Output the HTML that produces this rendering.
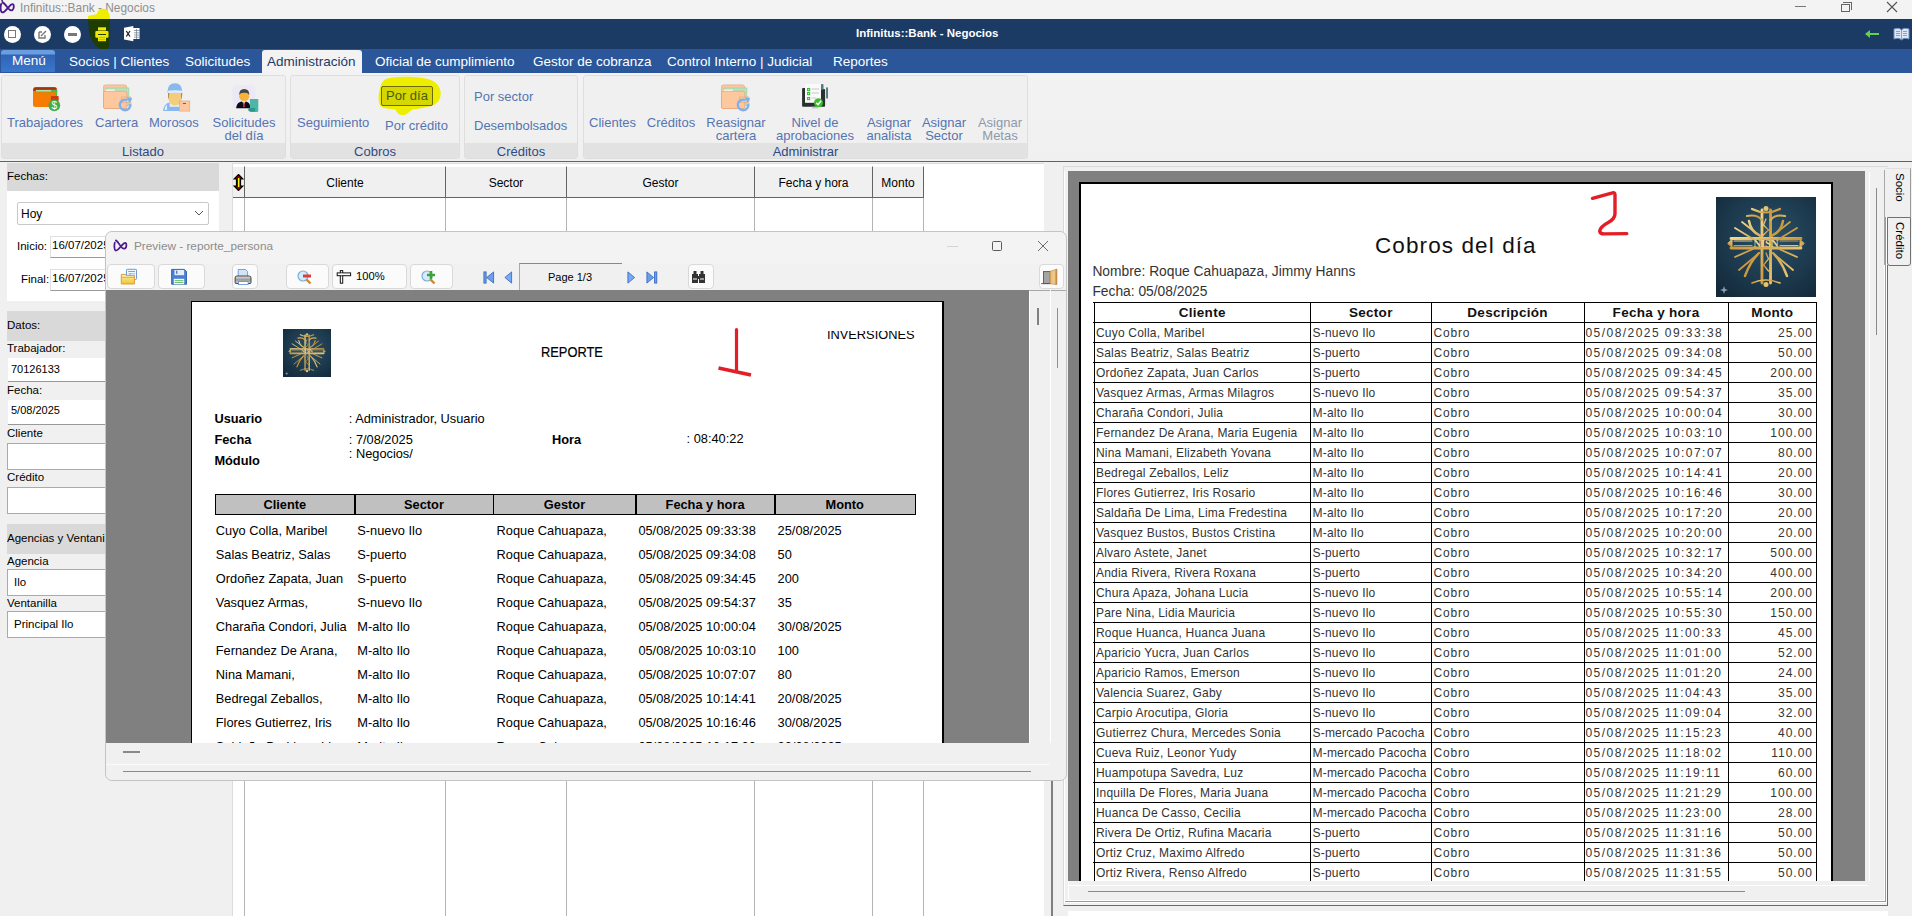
<!DOCTYPE html>
<html><head><meta charset="utf-8">
<style>
*{margin:0;padding:0;box-sizing:border-box}
html,body{width:1912px;height:916px;overflow:hidden;background:#f0f0f0;font-family:"Liberation Sans",sans-serif;position:relative}
.a{position:absolute}
.t{position:absolute;white-space:nowrap;line-height:1}
.r2{transform:scaleY(1.12);transform-origin:0 10.9px}
</style></head><body>

<!-- ===== TITLE BAR ===== -->
<div class="a" style="left:0;top:0;width:1912px;height:19px;background:#f3f3f3"></div>
<svg class="a" style="left:0;top:0" width="16" height="15" viewBox="0 0 16 15"><path d="M1.8 0 L2.6 1.8" stroke="#3a1470" stroke-width="1.5"/><path d="M2.5 2.5 C4.5 3 6 5.5 7.8 8 C9.5 10 11 11 12.5 10 C14 9 14.2 5 13 4.3 C11.5 3.5 10 5.5 7.8 8 C6 10 4 13 2 12.3 C0.2 11.6 0.3 6 1.2 4" fill="none" stroke="#4c1a8c" stroke-width="1.9" stroke-linecap="round"/></svg>
<div class="t" style="left:20px;top:3px;font-size:11.9px;color:#8f8f8f">Infinitus::Bank - Negocios</div>
<div class="a" style="left:1795px;top:6px;width:11px;height:1px;background:#777"></div>
<div class="a" style="left:1841px;top:4px;width:9px;height:8px;border:1px solid #666"></div>
<div class="a" style="left:1843px;top:2px;width:9px;height:8px;border-top:1px solid #666;border-right:1px solid #666"></div>
<svg class="a" style="left:1886px;top:1px" width="12" height="12" viewBox="0 0 12 12"><path d="M1 1 L11 11 M11 1 L1 11" stroke="#555" stroke-width="1.1"/></svg>

<!-- ===== DARK TOOLBAR ===== -->
<div class="a" style="left:0;top:19px;width:1912px;height:30px;background:#1b3a64"></div>
<div class="a" style="left:4px;top:26px;width:17px;height:17px;border-radius:50%;background:#fff"></div>
<div class="a" style="left:8px;top:30px;width:8px;height:8px;border:1.5px solid #777"></div>
<div class="a" style="left:34px;top:26px;width:17px;height:17px;border-radius:50%;background:#fff"></div>
<svg class="a" style="left:37px;top:29px" width="11" height="11" viewBox="0 0 11 11"><path d="M2 3 V9 H8 V6 M2 3 H5 M4 7 L9 2" fill="none" stroke="#777" stroke-width="1.4"/></svg>
<div class="a" style="left:64px;top:26px;width:17px;height:17px;border-radius:50%;background:#fff"></div>
<div class="a" style="left:68px;top:33px;width:9px;height:3px;background:#777"></div>
<svg class="a" style="left:86px;top:6px" width="28" height="46" viewBox="0 0 28 46"><defs><clipPath id="hlt"><rect x="0" y="0" width="28" height="13"/></clipPath><clipPath id="hlb"><rect x="0" y="13" width="28" height="33"/></clipPath></defs>
<g clip-path="url(#hlt)"><path d="M2 10 C4 9 9 9 11 8 C12 3 15 2 19 3 C23 5 24 9 24 13 L24 20 L2 20 Z" fill="#eeee00"/></g>
<g clip-path="url(#hlb)"><path d="M2 10 C4 9 9 9 11 8 C12 3 15 2 19 3 C23 5 24 9 24 13 L23 40 C22 45 18 45 15 44 C10 40 5 36 3 26 Z" fill="#203d00"/></g></svg>
<svg class="a" style="left:95px;top:27px" width="14" height="15" viewBox="0 0 14 15"><rect x="3" y="0.3" width="8" height="3.2" fill="#f0e800"/><rect x="0.3" y="4" width="13.2" height="6.8" rx="1" fill="#f0e800"/><rect x="3" y="7" width="8" height="1" fill="#203d00"/><rect x="3" y="8" width="8" height="6.2" fill="#f0e800"/><rect x="4" y="10" width="6" height="0.8" fill="#b8b000"/><rect x="4" y="12.3" width="6" height="0.8" fill="#b8b000"/></svg>
<svg class="a" style="left:124px;top:26px" width="16" height="16" viewBox="0 0 16 16"><path d="M0 1.8 L9.3 0 V15.2 L0 13.4Z" fill="#fff"/><rect x="9" y="2" width="6.5" height="11" fill="#fff"/><path d="M2.3 5 L6 10.5 M6 5 L2.3 10.5" stroke="#222" stroke-width="1.3"/><path d="M10 4.5 H15 M10 6.8 H15 M10 9 H15 M10 11.2 H15 M12.5 3 V13" stroke="#7a8796" stroke-width="0.8"/></svg>
<div class="t" style="left:856px;top:28px;font-size:11.5px;font-weight:bold;color:#fff">Infinitus::Bank - Negocios</div>
<svg class="a" style="left:1864px;top:29px" width="16" height="10" viewBox="0 0 16 10"><path d="M1 5 L6 1 V4 H15 V6 H6 V9 Z" fill="#5fd44a"/></svg>
<svg class="a" style="left:1893px;top:27px" width="17" height="14" viewBox="0 0 17 14"><path d="M1 2 C4 1 7 1 8.5 3 C10 1 13 1 16 2 V12 C13 11 10 11 8.5 13 C7 11 4 11 1 12Z" fill="#dfe8f5" stroke="#6d8fc4" stroke-width="1"/><path d="M8.5 3V13 M3 4.5H7 M3 6.5H7 M3 8.5H7 M10 4.5H14 M10 6.5H14 M10 8.5H14" stroke="#6d8fc4" stroke-width="0.8"/></svg>

<!-- ===== MENU BAR ===== -->
<div class="a" style="left:0;top:49px;width:1912px;height:24px;background:#2b579a"></div>
<div class="a" style="left:1px;top:50px;width:54px;height:22px;border-radius:3px 3px 0 0;background:linear-gradient(#6a9ee0 0,#6a9ee0 4px,#2f64b5 5px,#3a76cc 100%)"></div>
<div class="t" style="left:12px;top:54px;font-size:13.5px;color:#fff">Menú</div>
<div class="t" style="left:69px;top:55px;font-size:13.5px;color:#fff">Socios | Clientes</div>
<div class="t" style="left:185px;top:55px;font-size:13.5px;color:#fff">Solicitudes</div>
<div class="a" style="left:262px;top:50px;width:100px;height:24px;border-radius:3px 3px 0 0;background:#f3f3f3"></div>
<div class="t" style="left:267px;top:55px;font-size:13.5px;color:#1f3a66">Administración</div>
<div class="t" style="left:375px;top:55px;font-size:13.5px;color:#fff">Oficial de cumplimiento</div>
<div class="t" style="left:533px;top:55px;font-size:13.5px;color:#fff">Gestor de cobranza</div>
<div class="t" style="left:667px;top:55px;font-size:13.5px;color:#fff">Control Interno | Judicial</div>
<div class="t" style="left:833px;top:55px;font-size:13.5px;color:#fff">Reportes</div>

<!-- ===== RIBBON ===== -->
<div class="a" style="left:0;top:73px;width:1912px;height:88px;background:linear-gradient(#f3f3f3,#f0f0f0)"></div>
<div class="a" style="left:1px;top:75px;width:285px;height:84px;border:1px solid #dedede;border-radius:3px;background:#f0f0f0"></div>
<div class="a" style="left:2px;top:143px;width:283px;height:15px;background:#e2e2e2"></div>
<div class="a" style="left:290px;top:75px;width:170px;height:84px;border:1px solid #dedede;border-radius:3px;background:#f0f0f0"></div>
<div class="a" style="left:291px;top:143px;width:168px;height:15px;background:#e2e2e2"></div>
<div class="a" style="left:464px;top:75px;width:114px;height:84px;border:1px solid #dedede;border-radius:3px;background:#f0f0f0"></div>
<div class="a" style="left:465px;top:143px;width:112px;height:15px;background:#e2e2e2"></div>
<div class="a" style="left:583px;top:75px;width:445px;height:84px;border:1px solid #dedede;border-radius:3px;background:#f0f0f0"></div>
<div class="a" style="left:584px;top:143px;width:443px;height:15px;background:#e2e2e2"></div>
<div class="a" style="left:0;top:160.5px;width:1912px;height:1.6px;background:#3e67a6"></div>


<!-- ribbon icons -->
<svg class="a" style="left:33px;top:86px" width="28" height="26" viewBox="0 0 28 26"><rect x="0" y="0.9" width="24" height="20" rx="2.5" fill="#f57c00"/><path d="M0.3 4.5 Q0.3 1.2 3 1.2 H21 Q23.7 1.2 23.7 3.5 V5 H0.3Z" fill="#a8320a"/><rect x="2.6" y="3.8" width="21.6" height="2.4" fill="#4cbb4c"/><rect x="3" y="4.4" width="15" height="0.9" fill="#e8ffe8"/><rect x="23" y="3.8" width="1.2" height="7" fill="#4cbb4c"/><rect x="17.9" y="10" width="7.8" height="5" rx="0.8" fill="#d03c10"/><circle cx="21.3" cy="19.3" r="5.9" fill="#3fae4f"/><text x="21.3" y="23.2" font-family="Liberation Sans" font-size="10" fill="#fff" text-anchor="middle">$</text></svg>
<svg class="a" style="left:103px;top:84px" width="31" height="29" viewBox="0 0 31 29"><rect x="0.3" y="0.9" width="23.5" height="23.6" rx="2.5" fill="#fdc89e" stroke="#e49a70" stroke-width="0.6"/><rect x="2.3" y="4" width="23.6" height="17.6" fill="#b9e2bd" stroke="#8fcf99" stroke-width="0.6"/><rect x="2.5" y="5.6" width="9.3" height="1.4" fill="#fff"/><rect x="0.5" y="7.2" width="23.3" height="17.3" rx="1.5" fill="#fdc89e" stroke="#e49a70" stroke-width="0.6"/><rect x="18.7" y="13" width="9.2" height="5.2" fill="#fdc89e" stroke="#e49a70" stroke-width="0.5"/><path d="M27.2 19.5 A5.3 5.3 0 1 1 24.5 16.2" fill="none" stroke="#7fb0ee" stroke-width="2.4"/><path d="M23.5 13.2 L29.2 14.2 L26.8 19Z" fill="#7fb0ee"/></svg>
<svg class="a" style="left:162px;top:82px" width="29" height="30" viewBox="162 82 29 30"><path d="M163 111.1 Q163.5 103.5 170 102.2 H179.2 V111.1Z" fill="#8ab8ee"/><path d="M164.5 110 Q165 106 167 104.5 V110Z" fill="#dff0fb"/><rect x="169.7" y="102.2" width="9.5" height="4.6" fill="#dff0fb"/><path d="M168 93 Q168 105.5 175.1 105.5 Q182.2 105.5 182.2 93Z" fill="#f3cd7c"/><path d="M168 93 Q168 98 169 99.5 L169.2 93Z M182.2 93 Q182.2 98 181.2 99.5 L181 93Z" fill="#b8834a"/><path d="M167.4 92.4 Q167.4 83.2 174.9 83.2 Q182.3 83.2 182.3 92.4Z" fill="#8ab8ee"/><path d="M168 90.8 Q175 89.5 182 90.8 L181.8 93 Q175 92 168.2 93Z" fill="#e0f0ff"/><rect x="179.5" y="101" width="10.3" height="10.1" fill="#fdc89e" stroke="#e0a07a" stroke-width="0.6"/><rect x="182.9" y="103" width="3.1" height="0.9" fill="#8a4a20"/></svg>
<svg class="a" style="left:232px;top:85px" width="28" height="28" viewBox="232 85 28 28"><rect x="232.7" y="85.5" width="22.7" height="23" rx="2.5" fill="#ece8f6"/><path d="M236.1 108.2 Q236.5 101.5 243.9 101 Q250.5 101.5 250.5 108.2Z" fill="#0a0a1a"/><path d="M242 101 L243.9 105 L245.8 101Z" fill="#fff"/><path d="M243.4 101.8 H244.4 L244.8 106.5 L243.9 107.5 L243 106.5Z" fill="#d0303a"/><ellipse cx="244.2" cy="96.2" rx="5" ry="4.9" fill="#f5b23c"/><path d="M239.2 95 Q239 88.9 244.2 88.9 Q249.4 88.9 249.3 95 Q248 92.5 244.2 92.8 Q240.5 92.5 239.2 95Z" fill="#454545"/><path d="M249.9 99 H258.3 V110.5 Q258.3 112 256.8 112 H250 Z" fill="#4db6a8"/><path d="M248.2 109.5 Q248.2 107.9 250 107.9 H255.1 V111.4 H250 Q248.2 111.4 248.2 109.5Z" fill="#2a9985"/></svg>
<svg class="a" style="left:721px;top:84px" width="31" height="29" viewBox="0 0 31 29"><rect x="0.3" y="0.9" width="23.5" height="23.6" rx="2.5" fill="#fdc89e" stroke="#e49a70" stroke-width="0.6"/><rect x="2.3" y="4" width="23.6" height="17.6" fill="#b9e2bd" stroke="#8fcf99" stroke-width="0.6"/><rect x="2.5" y="5.6" width="9.3" height="1.4" fill="#fff"/><rect x="0.5" y="7.2" width="23.3" height="17.3" rx="1.5" fill="#fdc89e" stroke="#e49a70" stroke-width="0.6"/><rect x="18.7" y="13" width="9.2" height="5.2" fill="#fdc89e" stroke="#e49a70" stroke-width="0.5"/><path d="M27.2 19.5 A5.3 5.3 0 1 1 24.5 16.2" fill="none" stroke="#7fb0ee" stroke-width="2.4"/><path d="M23.5 13.2 L29.2 14.2 L26.8 19Z" fill="#7fb0ee"/></svg>
<svg class="a" style="left:800px;top:82px" width="32" height="28" viewBox="800 82 32 28"><path d="M802.1 89 Q802.1 88.1 803 88.1 H805 V102.6 H821 V89 H824.2 Q825.1 89 825.1 90 V105.8 Q825.1 106.7 824.2 106.7 H803 Q802.1 106.7 802.1 105.8Z" fill="#2a2f30"/><rect x="805.1" y="84" width="15.6" height="18.6" fill="#fafafa"/><rect x="821" y="84" width="2.5" height="6" rx="1" fill="#4f7a80"/><rect x="826.1" y="87.3" width="1.9" height="11.3" rx="0.9" fill="#4f7a80"/><rect x="807" y="88" width="3.2" height="3.2" fill="#3cc03c"/><rect x="808.2" y="89.2" width="0.9" height="0.9" fill="#fff"/><rect x="807" y="92" width="3.2" height="3.2" fill="#3cc03c"/><rect x="808.2" y="93.2" width="0.9" height="0.9" fill="#fff"/><rect x="807" y="97" width="3.2" height="3.2" fill="#3cc03c"/><rect x="808.2" y="98.2" width="0.9" height="0.9" fill="#fff"/><path d="M811.5 89 H819 M811.5 93 H819 M811.5 98 H816" stroke="#c8c8c8" stroke-width="1.2"/><rect x="812" y="106.7" width="6" height="1.8" fill="#c8c8c8"/><circle cx="818.5" cy="102.8" r="4.5" fill="#3cbf2c"/><path d="M816.2 102.8 L818 104.6 L821 100.8" fill="none" stroke="#fff" stroke-width="1.5"/></svg>

<!-- ribbon labels -->
<div class="t" style="left:7px;top:116px;font-size:13px;color:#5574b0">Trabajadores</div>
<div class="t" style="left:95px;top:116px;font-size:13px;color:#5574b0">Cartera</div>
<div class="t" style="left:149px;top:116px;font-size:13px;color:#5574b0">Morosos</div>
<div class="t" style="left:212px;top:116px;font-size:13px;color:#5574b0;text-align:center;width:64px;line-height:13px">Solicitudes<br>del día</div>
<div class="t" style="left:0;top:145px;width:286px;text-align:center;font-size:13px;color:#2c4a85">Listado</div>

<div class="t" style="left:297px;top:116px;font-size:13px;color:#5574b0">Seguimiento</div>
<svg class="a" style="left:376px;top:74px" width="68" height="44" viewBox="376 74 68 44"><path d="M380.4 86.7 C382 81 385 78.4 392 77.5 C400 76.5 407 76.5 414 77 C422 77.5 428 78.5 432 80.5 C437 83 440.7 88 440.7 93 C440.7 98 439 102 434 105 C428 107.5 420 108.5 412.2 109.5 C410 111 407 115 403 115.2 C399 115.4 397 113 395.5 109.5 C390 109 383 108.5 380.5 106 C378.5 103 378.5 97 378.7 94 Z" fill="#eeee00"/></svg>
<div class="a" style="left:381px;top:86px;width:52px;height:20px;border:1px solid #6b6b00;border-radius:2px;background:#d6d600"></div>
<div class="t" style="left:386px;top:89px;font-size:13px;color:#4a5a10">Por día</div>
<div class="t" style="left:385px;top:119px;font-size:13px;color:#5574b0">Por crédito</div>
<div class="t" style="left:290px;top:145px;width:170px;text-align:center;font-size:13px;color:#2c4a85">Cobros</div>

<div class="t" style="left:474px;top:90px;font-size:13px;color:#5574b0">Por sector</div>
<div class="t" style="left:474px;top:119px;font-size:13px;color:#5574b0">Desembolsados</div>
<div class="t" style="left:464px;top:145px;width:114px;text-align:center;font-size:13px;color:#2c4a85">Créditos</div>

<div class="t" style="left:582px;top:116px;width:61px;text-align:center;font-size:13px;color:#5574b0">Clientes</div>
<div class="t" style="left:641px;top:116px;width:60px;text-align:center;font-size:13px;color:#5574b0">Créditos</div>
<div class="t" style="left:700px;top:116px;width:72px;text-align:center;font-size:13px;line-height:13px;color:#5574b0">Reasignar<br>cartera</div>
<div class="t" style="left:770px;top:116px;width:90px;text-align:center;font-size:13px;line-height:13px;color:#5574b0">Nivel de<br>aprobaciones</div>
<div class="t" style="left:859px;top:116px;width:60px;text-align:center;font-size:13px;line-height:13px;color:#5574b0">Asignar<br>analista</div>
<div class="t" style="left:914px;top:116px;width:60px;text-align:center;font-size:13px;line-height:13px;color:#5574b0">Asignar<br>Sector</div>
<div class="t" style="left:970px;top:116px;width:60px;text-align:center;font-size:13px;line-height:13px;color:#8d99ab">Asignar<br>Metas</div>
<div class="t" style="left:583px;top:145px;width:445px;text-align:center;font-size:13px;color:#2c4a85">Administrar</div>

<!-- ===== LEFT PANEL ===== -->
<div class="a" style="left:7px;top:163px;width:212px;height:28px;background:#d9d9d9"></div>
<div class="t" style="left:7px;top:171px;font-size:11.5px;color:#000">Fechas:</div>
<div class="a" style="left:7px;top:191px;width:212px;height:110px;background:#fff"></div>
<div class="a" style="left:17px;top:202px;width:192px;height:23px;border:1px solid #c9c9c9;border-radius:2px;background:#fff"></div>
<div class="t" style="left:21px;top:208px;font-size:12px;color:#000">Hoy</div>
<svg class="a" style="left:194px;top:210px" width="10" height="6" viewBox="0 0 10 6"><path d="M1 1 L5 5 L9 1" fill="none" stroke="#555" stroke-width="1"/></svg>
<div class="t" style="left:17px;top:241px;font-size:11.5px;color:#000">Inicio:</div>
<div class="a" style="left:50px;top:236px;width:80px;height:22px;border-bottom:1px solid #999;border-left:1px solid #e0e0e0;border-top:1px solid #e0e0e0;background:#fff"></div>
<div class="t" style="left:52px;top:240px;font-size:11.5px;color:#000">16/07/2025</div>
<div class="t" style="left:21px;top:274px;font-size:11.5px;color:#000">Final:</div>
<div class="a" style="left:50px;top:269px;width:80px;height:22px;border-bottom:1px solid #999;border-left:1px solid #e0e0e0;border-top:1px solid #e0e0e0;background:#fff"></div>
<div class="t" style="left:52px;top:273px;font-size:11.5px;color:#000">16/07/2025</div>

<div class="a" style="left:7px;top:311px;width:212px;height:30px;background:#d9d9d9"></div>
<div class="t" style="left:7px;top:320px;font-size:11.5px;color:#000">Datos:</div>
<div class="t" style="left:7px;top:343px;font-size:11.5px;color:#000">Trabajador:</div>
<div class="a" style="left:8px;top:358px;width:210px;height:24px;border-bottom:1px solid #999;background:#fff"></div>
<div class="t" style="left:11px;top:364px;font-size:11px;color:#000">70126133</div>
<div class="t" style="left:7px;top:385px;font-size:11.5px;color:#000">Fecha:</div>
<div class="a" style="left:8px;top:400px;width:210px;height:25px;border-bottom:1px solid #999;background:#fff"></div>
<div class="t" style="left:11px;top:405px;font-size:11px;color:#000">5/08/2025</div>
<div class="t" style="left:7px;top:428px;font-size:11.5px;color:#000">Cliente</div>
<div class="a" style="left:7px;top:443px;width:212px;height:27px;border:1px solid #aaa;background:#fff"></div>
<div class="t" style="left:7px;top:472px;font-size:11.5px;color:#000">Crédito</div>
<div class="a" style="left:7px;top:487px;width:212px;height:27px;border:1px solid #aaa;background:#fff"></div>
<div class="a" style="left:7px;top:524px;width:212px;height:30px;background:#d9d9d9"></div>
<div class="t" style="left:7px;top:533px;font-size:11.5px;color:#000">Agencias y Ventanillas</div>
<div class="t" style="left:7px;top:556px;font-size:11.5px;color:#000">Agencia</div>
<div class="a" style="left:7px;top:569px;width:212px;height:27px;border:1px solid #aaa;background:#fff"></div>
<div class="t" style="left:14px;top:577px;font-size:11.5px;color:#000">Ilo</div>
<div class="t" style="left:7px;top:598px;font-size:11.5px;color:#000">Ventanilla</div>
<div class="a" style="left:7px;top:611px;width:212px;height:27px;border:1px solid #aaa;background:#fff"></div>
<div class="t" style="left:14px;top:619px;font-size:11.5px;color:#000">Principal Ilo</div>

<!-- ===== GRID ===== -->
<div class="a" style="left:232px;top:163px;width:814px;height:753px;background:#fff;border-left:1px solid #dcdcdc;border-top:1px solid #dcdcdc"></div>
<div class="a" style="left:233px;top:166px;width:690px;height:32px;background:#f0f0f0;border-top:1px solid #fff;border-bottom:1px solid #646464"></div>
<div class="a" style="left:1044px;top:163px;width:20px;height:753px;background:#f0f0f0"></div>
<div class="a" style="left:1051px;top:780px;width:2px;height:136px;background:#808080"></div>
<div class="a" style="left:244px;top:166px;width:1px;height:750px;background:#b4b4b4"></div>
<div class="a" style="left:244px;top:167px;width:1px;height:31px;background:#646464"></div>
<div class="a" style="left:445px;top:166px;width:1px;height:750px;background:#b4b4b4"></div>
<div class="a" style="left:445px;top:167px;width:1px;height:31px;background:#646464"></div>
<div class="a" style="left:566px;top:166px;width:1px;height:750px;background:#b4b4b4"></div>
<div class="a" style="left:566px;top:167px;width:1px;height:31px;background:#646464"></div>
<div class="a" style="left:754px;top:166px;width:1px;height:750px;background:#b4b4b4"></div>
<div class="a" style="left:754px;top:167px;width:1px;height:31px;background:#646464"></div>
<div class="a" style="left:872px;top:166px;width:1px;height:750px;background:#b4b4b4"></div>
<div class="a" style="left:872px;top:167px;width:1px;height:31px;background:#646464"></div>
<div class="a" style="left:923px;top:166px;width:1px;height:750px;background:#b4b4b4"></div>
<div class="a" style="left:923px;top:167px;width:1px;height:31px;background:#646464"></div>
<svg class="a" style="left:233px;top:174px" width="11" height="17" viewBox="0 0 11 17"><path d="M5.5 0.5 L10 5 H7.5 V12 H10 L5.5 16.5 L1 12 H3.5 V5 H1 Z" fill="#8b0000" stroke="#000" stroke-width="1.2"/><rect x="5" y="4" width="1.4" height="9" fill="#ffff00"/></svg>
<div class="t" style="left:245px;top:177px;width:200px;text-align:center;font-size:12px;color:#000">Cliente</div>
<div class="t" style="left:446px;top:177px;width:120px;text-align:center;font-size:12px;color:#000">Sector</div>
<div class="t" style="left:567px;top:177px;width:187px;text-align:center;font-size:12px;color:#000">Gestor</div>
<div class="t" style="left:755px;top:177px;width:117px;text-align:center;font-size:12px;color:#000">Fecha y hora</div>
<div class="t" style="left:873px;top:177px;width:50px;text-align:center;font-size:12px;color:#000">Monto</div>

<!-- ===== RIGHT PANEL ===== -->
<div class="a" style="left:1063px;top:166px;width:825px;height:740px;background:#f0f0f0;border-left:1px solid #dadada;border-top:1px solid #dadada;border-bottom:1.5px solid #6b6b6b"></div>
<div class="a" style="left:1064px;top:171px;width:823px;height:732px;border-right:1px solid #fff;border-bottom:1px solid #fff"></div>
<div class="a" style="left:1064px;top:171px;width:822px;height:731px;border-right:1px solid #9a9a9a;border-bottom:1px solid #9a9a9a"></div>
<div class="a" style="left:1064px;top:171px;width:821px;height:730px;border-right:1px solid #fff;border-bottom:1px solid #fff"></div>
<div class="a" style="left:1064px;top:171px;width:1px;height:731px;background:#fff"></div>
<div class="a" style="left:1068px;top:171px;width:797px;height:710px;background:#808080;overflow:hidden">
<div class="a" style="left:11px;top:11px;width:754px;height:800px;background:#fff;border-left:2px solid #000;border-top:2px solid #000;border-right:2px solid #000"></div>
<div class="t" style="left:307.0px;top:63.7px;font-size:22.5px;letter-spacing:1.1px;color:#111;">Cobros del día</div>
<svg class="a" style="left:518px;top:17px" width="48" height="52" viewBox="0 0 48 52"><path d="M6.5 10.3 L26.5 4.8 Q29 4 29 7 L29 26 Q28.5 31 23 34 Q14 39 13.7 43 Q14 45.9 18 45.9 L40.8 45.6" fill="none" stroke="#e41e26" stroke-width="3.4" stroke-linecap="round" stroke-linejoin="round"/></svg>
<svg class="a" style="left:648px;top:26px" width="100" height="100" viewBox="0 0 100 100"><defs><radialGradient id="bg2" cx="55%" cy="40%" r="75%"><stop offset="0" stop-color="#2b5169"/><stop offset="1" stop-color="#13293a"/></radialGradient><linearGradient id="gd2" x1="0" y1="0" x2="1" y2="1"><stop offset="0" stop-color="#f2d88c"/><stop offset="0.5" stop-color="#c9963c"/><stop offset="1" stop-color="#e8c470"/></linearGradient></defs>
<rect width="100" height="100" fill="url(#bg2)"/>
<g fill="none" stroke="url(#gd2)" stroke-linecap="round">
<path d="M46 13 V86 M54.5 13 V86" stroke-width="2.8"/>
<path d="M50 22 L47.5 28 L52.5 33 L47.5 38 M50 56 L52.5 62 L47.5 68 L52.5 74" stroke-width="1.3"/>
<path d="M15 41.5 H85 M15 51 H85" stroke-width="2.8"/>
<path d="M18 44 H36 M18 48.5 H36 M64 44 H82 M64 48.5 H82" stroke-width="1.1"/>
<path d="M12 46.2 L16 42.5 L16 50 Z M88 46.2 L84 42.5 L84 50 Z" fill="#d8ae55" stroke-width="1"/>
<path d="M36 12 Q50 19 64 12 M31 19 Q41 17 46 23 M69 19 Q59 17 54.5 23" stroke-width="2.2"/>
<path d="M26 25 L44 39 M74 25 L56 39 M19 31 L37 42 M81 31 L63 42 M19 60 L37 52 M81 60 L63 52 M23 73 L42 57 M77 73 L58 57" stroke-width="1.8"/>
<path d="M33 24 Q35 35 44 38.5 M67 24 Q65 35 56 38.5 M43 56 Q34 65 29 79 M57 56 Q66 65 71 79" stroke-width="2.4"/>
<path d="M36 86 Q50 80 64 86" stroke-width="1.6"/>
</g>
<circle cx="50" cy="11.5" r="2.5" fill="#e6c46e"/><circle cx="50" cy="87.5" r="2.5" fill="#e6c46e"/>
<text x="50" y="50" font-family="Liberation Serif" font-size="10.5" font-weight="bold" fill="#f0d48a" text-anchor="middle">NISN</text>
<path d="M8 89 L9 92 L12 93 L9 94 L8 97 L7 94 L4 93 L7 92Z" fill="#8aa0b4"/></svg>
<div class="t" style="left:24.4px;top:93.9px;font-size:13.8px;color:#333;">Nombre: Roque Cahuapaza, Jimmy Hanns</div>
<div class="t" style="left:24.4px;top:114.0px;font-size:13.8px;color:#333;">Fecha: 05/08/2025</div>
<div class="a" style="left:25.9px;top:131.3px;width:1.5px;height:600.0px;background:#000"></div>
<div class="a" style="left:241.9px;top:131.3px;width:1.5px;height:600.0px;background:#000"></div>
<div class="a" style="left:362.9px;top:131.3px;width:1.5px;height:600.0px;background:#000"></div>
<div class="a" style="left:515.9px;top:131.3px;width:1.5px;height:600.0px;background:#000"></div>
<div class="a" style="left:659.9px;top:131.3px;width:1.5px;height:600.0px;background:#000"></div>
<div class="a" style="left:747.9px;top:131.3px;width:1.5px;height:600.0px;background:#000"></div>
<div class="a" style="left:25.4px;top:130.9px;width:723.9px;height:1.5px;background:#000"></div>
<div class="a" style="left:25.4px;top:150.9px;width:723.9px;height:1.5px;background:#000"></div>
<div class="a" style="left:25.4px;top:170.9px;width:723.9px;height:1.5px;background:#000"></div>
<div class="a" style="left:25.4px;top:190.9px;width:723.9px;height:1.5px;background:#000"></div>
<div class="a" style="left:25.4px;top:210.9px;width:723.9px;height:1.5px;background:#000"></div>
<div class="a" style="left:25.4px;top:230.9px;width:723.9px;height:1.5px;background:#000"></div>
<div class="a" style="left:25.4px;top:250.9px;width:723.9px;height:1.5px;background:#000"></div>
<div class="a" style="left:25.4px;top:270.9px;width:723.9px;height:1.5px;background:#000"></div>
<div class="a" style="left:25.4px;top:290.9px;width:723.9px;height:1.5px;background:#000"></div>
<div class="a" style="left:25.4px;top:310.9px;width:723.9px;height:1.5px;background:#000"></div>
<div class="a" style="left:25.4px;top:330.9px;width:723.9px;height:1.5px;background:#000"></div>
<div class="a" style="left:25.4px;top:350.9px;width:723.9px;height:1.5px;background:#000"></div>
<div class="a" style="left:25.4px;top:370.9px;width:723.9px;height:1.5px;background:#000"></div>
<div class="a" style="left:25.4px;top:390.9px;width:723.9px;height:1.5px;background:#000"></div>
<div class="a" style="left:25.4px;top:410.9px;width:723.9px;height:1.5px;background:#000"></div>
<div class="a" style="left:25.4px;top:430.9px;width:723.9px;height:1.5px;background:#000"></div>
<div class="a" style="left:25.4px;top:450.9px;width:723.9px;height:1.5px;background:#000"></div>
<div class="a" style="left:25.4px;top:470.9px;width:723.9px;height:1.5px;background:#000"></div>
<div class="a" style="left:25.4px;top:490.9px;width:723.9px;height:1.5px;background:#000"></div>
<div class="a" style="left:25.4px;top:510.9px;width:723.9px;height:1.5px;background:#000"></div>
<div class="a" style="left:25.4px;top:530.9px;width:723.9px;height:1.5px;background:#000"></div>
<div class="a" style="left:25.4px;top:550.9px;width:723.9px;height:1.5px;background:#000"></div>
<div class="a" style="left:25.4px;top:570.9px;width:723.9px;height:1.5px;background:#000"></div>
<div class="a" style="left:25.4px;top:590.9px;width:723.9px;height:1.5px;background:#000"></div>
<div class="a" style="left:25.4px;top:610.9px;width:723.9px;height:1.5px;background:#000"></div>
<div class="a" style="left:25.4px;top:630.9px;width:723.9px;height:1.5px;background:#000"></div>
<div class="a" style="left:25.4px;top:650.9px;width:723.9px;height:1.5px;background:#000"></div>
<div class="a" style="left:25.4px;top:670.9px;width:723.9px;height:1.5px;background:#000"></div>
<div class="a" style="left:25.4px;top:690.9px;width:723.9px;height:1.5px;background:#000"></div>
<div class="a" style="left:25.4px;top:710.9px;width:723.9px;height:1.5px;background:#000"></div>
<div class="a" style="left:25.4px;top:730.9px;width:723.9px;height:1.5px;background:#000"></div>
<div class="t" style="left:26.0px;top:134.5px;width:216.4px;text-align:center;font-size:13.5px;font-weight:bold;color:#111;letter-spacing:0.3px">Cliente</div>
<div class="t" style="left:242.4px;top:134.5px;width:120.8px;text-align:center;font-size:13.5px;font-weight:bold;color:#111;letter-spacing:0.3px">Sector</div>
<div class="t" style="left:363.2px;top:134.5px;width:152.8px;text-align:center;font-size:13.5px;font-weight:bold;color:#111;letter-spacing:0.3px">Descripción</div>
<div class="t" style="left:516.0px;top:134.5px;width:144.1px;text-align:center;font-size:13.5px;font-weight:bold;color:#111;letter-spacing:0.3px">Fecha y hora</div>
<div class="t" style="left:660.1px;top:134.5px;width:88.5px;text-align:center;font-size:13.5px;font-weight:bold;color:#111;letter-spacing:0.3px">Monto</div>
<div class="t r2" style="left:28.0px;top:155.9px;font-size:12px;color:#333;letter-spacing:0.2px">Cuyo Colla, Maribel</div>
<div class="t r2" style="left:244.5px;top:155.9px;font-size:12px;color:#333;letter-spacing:0.2px">S-nuevo Ilo</div>
<div class="t r2" style="left:365.5px;top:155.9px;font-size:12px;color:#333;letter-spacing:0.8px">Cobro</div>
<div class="t r2" style="left:517.5px;top:155.9px;font-size:12px;color:#333;letter-spacing:1.45px">05/08/2025 09:33:38</div>
<div class="t r2" style="left:660px;top:155.9px;width:85px;text-align:right;font-size:12px;color:#333;letter-spacing:1px">25.00</div>
<div class="t r2" style="left:28.0px;top:175.9px;font-size:12px;color:#333;letter-spacing:0.2px">Salas Beatriz, Salas Beatriz</div>
<div class="t r2" style="left:244.5px;top:175.9px;font-size:12px;color:#333;letter-spacing:0.2px">S-puerto</div>
<div class="t r2" style="left:365.5px;top:175.9px;font-size:12px;color:#333;letter-spacing:0.8px">Cobro</div>
<div class="t r2" style="left:517.5px;top:175.9px;font-size:12px;color:#333;letter-spacing:1.45px">05/08/2025 09:34:08</div>
<div class="t r2" style="left:660px;top:175.9px;width:85px;text-align:right;font-size:12px;color:#333;letter-spacing:1px">50.00</div>
<div class="t r2" style="left:28.0px;top:195.9px;font-size:12px;color:#333;letter-spacing:0.2px">Ordoñez Zapata, Juan Carlos</div>
<div class="t r2" style="left:244.5px;top:195.9px;font-size:12px;color:#333;letter-spacing:0.2px">S-puerto</div>
<div class="t r2" style="left:365.5px;top:195.9px;font-size:12px;color:#333;letter-spacing:0.8px">Cobro</div>
<div class="t r2" style="left:517.5px;top:195.9px;font-size:12px;color:#333;letter-spacing:1.45px">05/08/2025 09:34:45</div>
<div class="t r2" style="left:660px;top:195.9px;width:85px;text-align:right;font-size:12px;color:#333;letter-spacing:1px">200.00</div>
<div class="t r2" style="left:28.0px;top:215.9px;font-size:12px;color:#333;letter-spacing:0.2px">Vasquez Armas, Armas Milagros</div>
<div class="t r2" style="left:244.5px;top:215.9px;font-size:12px;color:#333;letter-spacing:0.2px">S-nuevo Ilo</div>
<div class="t r2" style="left:365.5px;top:215.9px;font-size:12px;color:#333;letter-spacing:0.8px">Cobro</div>
<div class="t r2" style="left:517.5px;top:215.9px;font-size:12px;color:#333;letter-spacing:1.45px">05/08/2025 09:54:37</div>
<div class="t r2" style="left:660px;top:215.9px;width:85px;text-align:right;font-size:12px;color:#333;letter-spacing:1px">35.00</div>
<div class="t r2" style="left:28.0px;top:235.9px;font-size:12px;color:#333;letter-spacing:0.2px">Charaña Condori, Julia</div>
<div class="t r2" style="left:244.5px;top:235.9px;font-size:12px;color:#333;letter-spacing:0.2px">M-alto Ilo</div>
<div class="t r2" style="left:365.5px;top:235.9px;font-size:12px;color:#333;letter-spacing:0.8px">Cobro</div>
<div class="t r2" style="left:517.5px;top:235.9px;font-size:12px;color:#333;letter-spacing:1.45px">05/08/2025 10:00:04</div>
<div class="t r2" style="left:660px;top:235.9px;width:85px;text-align:right;font-size:12px;color:#333;letter-spacing:1px">30.00</div>
<div class="t r2" style="left:28.0px;top:255.9px;font-size:12px;color:#333;letter-spacing:0.2px">Fernandez De Arana, Maria Eugenia</div>
<div class="t r2" style="left:244.5px;top:255.9px;font-size:12px;color:#333;letter-spacing:0.2px">M-alto Ilo</div>
<div class="t r2" style="left:365.5px;top:255.9px;font-size:12px;color:#333;letter-spacing:0.8px">Cobro</div>
<div class="t r2" style="left:517.5px;top:255.9px;font-size:12px;color:#333;letter-spacing:1.45px">05/08/2025 10:03:10</div>
<div class="t r2" style="left:660px;top:255.9px;width:85px;text-align:right;font-size:12px;color:#333;letter-spacing:1px">100.00</div>
<div class="t r2" style="left:28.0px;top:275.9px;font-size:12px;color:#333;letter-spacing:0.2px">Nina Mamani, Elizabeth Yovana</div>
<div class="t r2" style="left:244.5px;top:275.9px;font-size:12px;color:#333;letter-spacing:0.2px">M-alto Ilo</div>
<div class="t r2" style="left:365.5px;top:275.9px;font-size:12px;color:#333;letter-spacing:0.8px">Cobro</div>
<div class="t r2" style="left:517.5px;top:275.9px;font-size:12px;color:#333;letter-spacing:1.45px">05/08/2025 10:07:07</div>
<div class="t r2" style="left:660px;top:275.9px;width:85px;text-align:right;font-size:12px;color:#333;letter-spacing:1px">80.00</div>
<div class="t r2" style="left:28.0px;top:295.9px;font-size:12px;color:#333;letter-spacing:0.2px">Bedregal Zeballos, Leliz</div>
<div class="t r2" style="left:244.5px;top:295.9px;font-size:12px;color:#333;letter-spacing:0.2px">M-alto Ilo</div>
<div class="t r2" style="left:365.5px;top:295.9px;font-size:12px;color:#333;letter-spacing:0.8px">Cobro</div>
<div class="t r2" style="left:517.5px;top:295.9px;font-size:12px;color:#333;letter-spacing:1.45px">05/08/2025 10:14:41</div>
<div class="t r2" style="left:660px;top:295.9px;width:85px;text-align:right;font-size:12px;color:#333;letter-spacing:1px">20.00</div>
<div class="t r2" style="left:28.0px;top:315.9px;font-size:12px;color:#333;letter-spacing:0.2px">Flores Gutierrez, Iris Rosario</div>
<div class="t r2" style="left:244.5px;top:315.9px;font-size:12px;color:#333;letter-spacing:0.2px">M-alto Ilo</div>
<div class="t r2" style="left:365.5px;top:315.9px;font-size:12px;color:#333;letter-spacing:0.8px">Cobro</div>
<div class="t r2" style="left:517.5px;top:315.9px;font-size:12px;color:#333;letter-spacing:1.45px">05/08/2025 10:16:46</div>
<div class="t r2" style="left:660px;top:315.9px;width:85px;text-align:right;font-size:12px;color:#333;letter-spacing:1px">30.00</div>
<div class="t r2" style="left:28.0px;top:335.9px;font-size:12px;color:#333;letter-spacing:0.2px">Saldaña De Lima, Lima Fredestina</div>
<div class="t r2" style="left:244.5px;top:335.9px;font-size:12px;color:#333;letter-spacing:0.2px">M-alto Ilo</div>
<div class="t r2" style="left:365.5px;top:335.9px;font-size:12px;color:#333;letter-spacing:0.8px">Cobro</div>
<div class="t r2" style="left:517.5px;top:335.9px;font-size:12px;color:#333;letter-spacing:1.45px">05/08/2025 10:17:20</div>
<div class="t r2" style="left:660px;top:335.9px;width:85px;text-align:right;font-size:12px;color:#333;letter-spacing:1px">20.00</div>
<div class="t r2" style="left:28.0px;top:355.9px;font-size:12px;color:#333;letter-spacing:0.2px">Vasquez Bustos, Bustos Cristina</div>
<div class="t r2" style="left:244.5px;top:355.9px;font-size:12px;color:#333;letter-spacing:0.2px">M-alto Ilo</div>
<div class="t r2" style="left:365.5px;top:355.9px;font-size:12px;color:#333;letter-spacing:0.8px">Cobro</div>
<div class="t r2" style="left:517.5px;top:355.9px;font-size:12px;color:#333;letter-spacing:1.45px">05/08/2025 10:20:00</div>
<div class="t r2" style="left:660px;top:355.9px;width:85px;text-align:right;font-size:12px;color:#333;letter-spacing:1px">20.00</div>
<div class="t r2" style="left:28.0px;top:375.9px;font-size:12px;color:#333;letter-spacing:0.2px">Alvaro Astete, Janet</div>
<div class="t r2" style="left:244.5px;top:375.9px;font-size:12px;color:#333;letter-spacing:0.2px">S-puerto</div>
<div class="t r2" style="left:365.5px;top:375.9px;font-size:12px;color:#333;letter-spacing:0.8px">Cobro</div>
<div class="t r2" style="left:517.5px;top:375.9px;font-size:12px;color:#333;letter-spacing:1.45px">05/08/2025 10:32:17</div>
<div class="t r2" style="left:660px;top:375.9px;width:85px;text-align:right;font-size:12px;color:#333;letter-spacing:1px">500.00</div>
<div class="t r2" style="left:28.0px;top:395.9px;font-size:12px;color:#333;letter-spacing:0.2px">Andia Rivera, Rivera Roxana</div>
<div class="t r2" style="left:244.5px;top:395.9px;font-size:12px;color:#333;letter-spacing:0.2px">S-puerto</div>
<div class="t r2" style="left:365.5px;top:395.9px;font-size:12px;color:#333;letter-spacing:0.8px">Cobro</div>
<div class="t r2" style="left:517.5px;top:395.9px;font-size:12px;color:#333;letter-spacing:1.45px">05/08/2025 10:34:20</div>
<div class="t r2" style="left:660px;top:395.9px;width:85px;text-align:right;font-size:12px;color:#333;letter-spacing:1px">400.00</div>
<div class="t r2" style="left:28.0px;top:415.9px;font-size:12px;color:#333;letter-spacing:0.2px">Chura Apaza, Johana Lucia</div>
<div class="t r2" style="left:244.5px;top:415.9px;font-size:12px;color:#333;letter-spacing:0.2px">S-nuevo Ilo</div>
<div class="t r2" style="left:365.5px;top:415.9px;font-size:12px;color:#333;letter-spacing:0.8px">Cobro</div>
<div class="t r2" style="left:517.5px;top:415.9px;font-size:12px;color:#333;letter-spacing:1.45px">05/08/2025 10:55:14</div>
<div class="t r2" style="left:660px;top:415.9px;width:85px;text-align:right;font-size:12px;color:#333;letter-spacing:1px">200.00</div>
<div class="t r2" style="left:28.0px;top:435.9px;font-size:12px;color:#333;letter-spacing:0.2px">Pare Nina, Lidia Mauricia</div>
<div class="t r2" style="left:244.5px;top:435.9px;font-size:12px;color:#333;letter-spacing:0.2px">S-nuevo Ilo</div>
<div class="t r2" style="left:365.5px;top:435.9px;font-size:12px;color:#333;letter-spacing:0.8px">Cobro</div>
<div class="t r2" style="left:517.5px;top:435.9px;font-size:12px;color:#333;letter-spacing:1.45px">05/08/2025 10:55:30</div>
<div class="t r2" style="left:660px;top:435.9px;width:85px;text-align:right;font-size:12px;color:#333;letter-spacing:1px">150.00</div>
<div class="t r2" style="left:28.0px;top:455.9px;font-size:12px;color:#333;letter-spacing:0.2px">Roque Huanca, Huanca Juana</div>
<div class="t r2" style="left:244.5px;top:455.9px;font-size:12px;color:#333;letter-spacing:0.2px">S-nuevo Ilo</div>
<div class="t r2" style="left:365.5px;top:455.9px;font-size:12px;color:#333;letter-spacing:0.8px">Cobro</div>
<div class="t r2" style="left:517.5px;top:455.9px;font-size:12px;color:#333;letter-spacing:1.45px">05/08/2025 11:00:33</div>
<div class="t r2" style="left:660px;top:455.9px;width:85px;text-align:right;font-size:12px;color:#333;letter-spacing:1px">45.00</div>
<div class="t r2" style="left:28.0px;top:475.9px;font-size:12px;color:#333;letter-spacing:0.2px">Aparicio Yucra, Juan Carlos</div>
<div class="t r2" style="left:244.5px;top:475.9px;font-size:12px;color:#333;letter-spacing:0.2px">S-nuevo Ilo</div>
<div class="t r2" style="left:365.5px;top:475.9px;font-size:12px;color:#333;letter-spacing:0.8px">Cobro</div>
<div class="t r2" style="left:517.5px;top:475.9px;font-size:12px;color:#333;letter-spacing:1.45px">05/08/2025 11:01:00</div>
<div class="t r2" style="left:660px;top:475.9px;width:85px;text-align:right;font-size:12px;color:#333;letter-spacing:1px">52.00</div>
<div class="t r2" style="left:28.0px;top:495.9px;font-size:12px;color:#333;letter-spacing:0.2px">Aparicio Ramos, Emerson</div>
<div class="t r2" style="left:244.5px;top:495.9px;font-size:12px;color:#333;letter-spacing:0.2px">S-nuevo Ilo</div>
<div class="t r2" style="left:365.5px;top:495.9px;font-size:12px;color:#333;letter-spacing:0.8px">Cobro</div>
<div class="t r2" style="left:517.5px;top:495.9px;font-size:12px;color:#333;letter-spacing:1.45px">05/08/2025 11:01:20</div>
<div class="t r2" style="left:660px;top:495.9px;width:85px;text-align:right;font-size:12px;color:#333;letter-spacing:1px">24.00</div>
<div class="t r2" style="left:28.0px;top:515.9px;font-size:12px;color:#333;letter-spacing:0.2px">Valencia Suarez, Gaby</div>
<div class="t r2" style="left:244.5px;top:515.9px;font-size:12px;color:#333;letter-spacing:0.2px">S-nuevo Ilo</div>
<div class="t r2" style="left:365.5px;top:515.9px;font-size:12px;color:#333;letter-spacing:0.8px">Cobro</div>
<div class="t r2" style="left:517.5px;top:515.9px;font-size:12px;color:#333;letter-spacing:1.45px">05/08/2025 11:04:43</div>
<div class="t r2" style="left:660px;top:515.9px;width:85px;text-align:right;font-size:12px;color:#333;letter-spacing:1px">35.00</div>
<div class="t r2" style="left:28.0px;top:535.9px;font-size:12px;color:#333;letter-spacing:0.2px">Carpio Arocutipa, Gloria</div>
<div class="t r2" style="left:244.5px;top:535.9px;font-size:12px;color:#333;letter-spacing:0.2px">S-nuevo Ilo</div>
<div class="t r2" style="left:365.5px;top:535.9px;font-size:12px;color:#333;letter-spacing:0.8px">Cobro</div>
<div class="t r2" style="left:517.5px;top:535.9px;font-size:12px;color:#333;letter-spacing:1.45px">05/08/2025 11:09:04</div>
<div class="t r2" style="left:660px;top:535.9px;width:85px;text-align:right;font-size:12px;color:#333;letter-spacing:1px">32.00</div>
<div class="t r2" style="left:28.0px;top:555.9px;font-size:12px;color:#333;letter-spacing:0.2px">Gutierrez Chura, Mercedes Sonia</div>
<div class="t r2" style="left:244.5px;top:555.9px;font-size:12px;color:#333;letter-spacing:0.2px">S-mercado Pacocha</div>
<div class="t r2" style="left:365.5px;top:555.9px;font-size:12px;color:#333;letter-spacing:0.8px">Cobro</div>
<div class="t r2" style="left:517.5px;top:555.9px;font-size:12px;color:#333;letter-spacing:1.45px">05/08/2025 11:15:23</div>
<div class="t r2" style="left:660px;top:555.9px;width:85px;text-align:right;font-size:12px;color:#333;letter-spacing:1px">40.00</div>
<div class="t r2" style="left:28.0px;top:575.9px;font-size:12px;color:#333;letter-spacing:0.2px">Cueva Ruiz, Leonor Yudy</div>
<div class="t r2" style="left:244.5px;top:575.9px;font-size:12px;color:#333;letter-spacing:0.2px">M-mercado Pacocha</div>
<div class="t r2" style="left:365.5px;top:575.9px;font-size:12px;color:#333;letter-spacing:0.8px">Cobro</div>
<div class="t r2" style="left:517.5px;top:575.9px;font-size:12px;color:#333;letter-spacing:1.45px">05/08/2025 11:18:02</div>
<div class="t r2" style="left:660px;top:575.9px;width:85px;text-align:right;font-size:12px;color:#333;letter-spacing:1px">110.00</div>
<div class="t r2" style="left:28.0px;top:595.9px;font-size:12px;color:#333;letter-spacing:0.2px">Huampotupa Savedra, Luz</div>
<div class="t r2" style="left:244.5px;top:595.9px;font-size:12px;color:#333;letter-spacing:0.2px">M-mercado Pacocha</div>
<div class="t r2" style="left:365.5px;top:595.9px;font-size:12px;color:#333;letter-spacing:0.8px">Cobro</div>
<div class="t r2" style="left:517.5px;top:595.9px;font-size:12px;color:#333;letter-spacing:1.45px">05/08/2025 11:19:11</div>
<div class="t r2" style="left:660px;top:595.9px;width:85px;text-align:right;font-size:12px;color:#333;letter-spacing:1px">60.00</div>
<div class="t r2" style="left:28.0px;top:615.9px;font-size:12px;color:#333;letter-spacing:0.2px">Inquilla De Flores, Maria Juana</div>
<div class="t r2" style="left:244.5px;top:615.9px;font-size:12px;color:#333;letter-spacing:0.2px">M-mercado Pacocha</div>
<div class="t r2" style="left:365.5px;top:615.9px;font-size:12px;color:#333;letter-spacing:0.8px">Cobro</div>
<div class="t r2" style="left:517.5px;top:615.9px;font-size:12px;color:#333;letter-spacing:1.45px">05/08/2025 11:21:29</div>
<div class="t r2" style="left:660px;top:615.9px;width:85px;text-align:right;font-size:12px;color:#333;letter-spacing:1px">100.00</div>
<div class="t r2" style="left:28.0px;top:635.9px;font-size:12px;color:#333;letter-spacing:0.2px">Huanca De Casso, Cecilia</div>
<div class="t r2" style="left:244.5px;top:635.9px;font-size:12px;color:#333;letter-spacing:0.2px">M-mercado Pacocha</div>
<div class="t r2" style="left:365.5px;top:635.9px;font-size:12px;color:#333;letter-spacing:0.8px">Cobro</div>
<div class="t r2" style="left:517.5px;top:635.9px;font-size:12px;color:#333;letter-spacing:1.45px">05/08/2025 11:23:00</div>
<div class="t r2" style="left:660px;top:635.9px;width:85px;text-align:right;font-size:12px;color:#333;letter-spacing:1px">28.00</div>
<div class="t r2" style="left:28.0px;top:655.9px;font-size:12px;color:#333;letter-spacing:0.2px">Rivera De Ortiz, Rufina Macaria</div>
<div class="t r2" style="left:244.5px;top:655.9px;font-size:12px;color:#333;letter-spacing:0.2px">S-puerto</div>
<div class="t r2" style="left:365.5px;top:655.9px;font-size:12px;color:#333;letter-spacing:0.8px">Cobro</div>
<div class="t r2" style="left:517.5px;top:655.9px;font-size:12px;color:#333;letter-spacing:1.45px">05/08/2025 11:31:16</div>
<div class="t r2" style="left:660px;top:655.9px;width:85px;text-align:right;font-size:12px;color:#333;letter-spacing:1px">50.00</div>
<div class="t r2" style="left:28.0px;top:675.9px;font-size:12px;color:#333;letter-spacing:0.2px">Ortiz Cruz, Maximo Alfredo</div>
<div class="t r2" style="left:244.5px;top:675.9px;font-size:12px;color:#333;letter-spacing:0.2px">S-puerto</div>
<div class="t r2" style="left:365.5px;top:675.9px;font-size:12px;color:#333;letter-spacing:0.8px">Cobro</div>
<div class="t r2" style="left:517.5px;top:675.9px;font-size:12px;color:#333;letter-spacing:1.45px">05/08/2025 11:31:36</div>
<div class="t r2" style="left:660px;top:675.9px;width:85px;text-align:right;font-size:12px;color:#333;letter-spacing:1px">50.00</div>
<div class="t r2" style="left:28.0px;top:695.9px;font-size:12px;color:#333;letter-spacing:0.2px">Ortiz Rivera, Renso Alfredo</div>
<div class="t r2" style="left:244.5px;top:695.9px;font-size:12px;color:#333;letter-spacing:0.2px">S-puerto</div>
<div class="t r2" style="left:365.5px;top:695.9px;font-size:12px;color:#333;letter-spacing:0.8px">Cobro</div>
<div class="t r2" style="left:517.5px;top:695.9px;font-size:12px;color:#333;letter-spacing:1.45px">05/08/2025 11:31:55</div>
<div class="t r2" style="left:660px;top:695.9px;width:85px;text-align:right;font-size:12px;color:#333;letter-spacing:1px">50.00</div>
<div class="t r2" style="left:28.0px;top:715.9px;font-size:12px;color:#333;letter-spacing:0.2px">Mamani Quispe, Rosa</div>
<div class="t r2" style="left:244.5px;top:715.9px;font-size:12px;color:#333;letter-spacing:0.2px">S-puerto</div>
<div class="t r2" style="left:365.5px;top:715.9px;font-size:12px;color:#333;letter-spacing:0.8px">Cobro</div>
<div class="t r2" style="left:517.5px;top:715.9px;font-size:12px;color:#333;letter-spacing:1.45px">05/08/2025 11:35:02</div>
<div class="t r2" style="left:660px;top:715.9px;width:85px;text-align:right;font-size:12px;color:#333;letter-spacing:1px">40.00</div>
</div>
<div class="a" style="left:1068px;top:881px;width:1px;height:19px;background:#fff"></div>
<div class="a" style="left:1869px;top:172px;width:1px;height:709px;background:#fff"></div>
<div class="a" style="left:1068px;top:885px;width:800px;height:1px;background:#fff"></div>
<div class="a" style="left:1088px;top:891px;width:657px;height:1px;background:#8a8a8a"></div>
<div class="a" style="left:1876px;top:188px;width:1px;height:147px;background:#8a8a8a"></div>
<div class="a" style="left:1063px;top:910px;width:849px;height:6px;background:#f0f0f0"></div>
<div class="a" style="left:1068px;top:911px;width:839px;height:5px;background:#fff"></div>
<!-- side tabs -->
<div class="a" style="left:1888px;top:166px;width:24px;height:750px;background:#f0f0f0"></div>
<div class="a" style="left:1884px;top:170px;width:1px;height:95px;background:#a8a8a8"></div>
<div class="a" style="left:1886.5px;top:265px;width:1.5px;height:641px;background:#6b6b6b"></div>
<div class="a" style="left:1885px;top:168px;width:26px;height:49px;background:#f0f0f0;border-right:1px solid #9a9a9a;border-top:1px solid #e0e0e0"></div>
<div class="t" style="left:1893px;top:173px;font-size:11.5px;color:#000;writing-mode:vertical-rl">Socio</div>
<div class="a" style="left:1887px;top:217px;width:24px;height:49px;background:#f0f0f0;border:1.5px solid #707070;border-radius:0 0 3px 3px"></div>
<div class="t" style="left:1893px;top:222px;font-size:11.5px;color:#000;writing-mode:vertical-rl">Crédito</div>

<!-- ===== PREVIEW WINDOW ===== -->
<div class="a" style="left:105px;top:231px;width:962px;height:550px;border:1px solid #c4c4c4;border-radius:7px;background:#f1f1f1;overflow:hidden"></div>
<div class="a" style="left:106px;top:232px;width:960px;height:32px;border-radius:7px 7px 0 0;background:#f3f3f3"></div>
<svg class="a" style="left:113px;top:239px" width="16" height="14" viewBox="0 0 16 15"><path d="M2.5 1.5 C4.5 2.5 6 5.5 7.8 8 C9.5 10 11 11 12.5 10 C14 9 14.2 5 13 4.3 C11.5 3.5 10 5.5 7.8 8 C6 10 4 13 2.2 12.3 C0.6 11.6 0.6 6 1.4 3.8" fill="none" stroke="#4c1a8c" stroke-width="1.9" stroke-linecap="round"/></svg>
<div class="t" style="left:134px;top:241px;font-size:11.8px;color:#8c8c8c">Preview - reporte_persona</div>
<div class="a" style="left:947px;top:246px;width:11px;height:1px;background:#d4d4d4"></div>
<div class="a" style="left:992px;top:241px;width:10px;height:10px;border:1px solid #5a5a5a;border-radius:1.5px"></div>
<svg class="a" style="left:1037px;top:240px" width="12" height="12" viewBox="0 0 12 12"><path d="M1 1 L11 11 M11 1 L1 11" stroke="#5a5a5a" stroke-width="0.9"/></svg>

<!-- toolbar -->
<div class="a" style="left:107px;top:264px;width:48px;height:25px;border:1px solid #d9d9d9;border-radius:4px;background:#fbfbfb"></div>
<svg class="a" style="left:120px;top:268px" width="18" height="18" viewBox="120 268 18 18"><defs><linearGradient id="fy" x1="0" y1="0" x2="0" y2="1"><stop offset="0" stop-color="#fdf0b0"/><stop offset="1" stop-color="#f0c430"/></linearGradient></defs><rect x="126.5" y="269.3" width="10" height="10.2" rx="0.8" fill="#f2f7fd" stroke="#5b8ed6" stroke-width="0.9"/><path d="M128.2 271.5 H135 " stroke="#5cb85c" stroke-width="0.9"/><path d="M128.5 273.8 H135 M128.5 276 H135 M130 273 V278" stroke="#7aa6e0" stroke-width="0.8"/><path d="M121.3 274.4 H125.5 L126.3 275.6 H134.4 V284 H121.3Z" fill="url(#fy)" stroke="#e0952a" stroke-width="0.9"/><path d="M121.3 277.5 H134.4" stroke="#e0952a" stroke-width="0.6"/></svg>
<div class="a" style="left:158px;top:264px;width:47px;height:25px;border:1px solid #d9d9d9;border-radius:4px;background:#fbfbfb"></div>
<svg class="a" style="left:170px;top:268px" width="18" height="18" viewBox="170 268 18 18"><path d="M171.6 269.4 H184.5 L186.5 271.4 V284.2 H171.6Z" fill="#4a7fd4" stroke="#2e5fb0" stroke-width="0.9"/><rect x="174.5" y="270" width="9.6" height="5.2" fill="#e4eefb"/><rect x="176.2" y="270.6" width="1.1" height="3.2" fill="#2e5fb0"/><rect x="173.8" y="278.8" width="10.4" height="5.4" fill="#fff"/><rect x="174.6" y="280.1" width="8.8" height="1" fill="#6cc06c"/><rect x="174.6" y="282" width="8.8" height="1" fill="#6cc06c"/></svg>
<div class="a" style="left:232px;top:264px;width:26px;height:25px;border:1px solid #d9d9d9;border-radius:4px;background:#fbfbfb"></div>
<svg class="a" style="left:234px;top:268px" width="18" height="18" viewBox="234 268 18 18"><defs><linearGradient id="pg" x1="0" y1="0" x2="0" y2="1"><stop offset="0" stop-color="#e8e8e8"/><stop offset="0.5" stop-color="#9a9a9a"/><stop offset="1" stop-color="#d0d0d0"/></linearGradient></defs><path d="M238.2 269.5 H245.5 L247.6 271.6 V276.5 H238.2Z" fill="#d4e4f8" stroke="#5b8ed6" stroke-width="0.8"/><path d="M236.8 276 H249.2 Q251 276 251 278 V282.5 Q251 283.5 250 283.5 H236 Q235.1 283.5 235.1 282.5 V278 Q235.1 276 236.8 276Z" fill="url(#pg)" stroke="#333" stroke-width="0.9"/><rect x="238.4" y="281.6" width="9.7" height="3" fill="#fff" stroke="#5b8ed6" stroke-width="0.8"/></svg>
<div class="a" style="left:286px;top:264px;width:43px;height:25px;border:1px solid #d9d9d9;border-radius:4px;background:#fbfbfb"></div>
<svg class="a" style="left:297px;top:270px" width="15" height="15" viewBox="0 0 15 15"><circle cx="6" cy="6" r="5" fill="#d6ecfb" stroke="#7ab0d8" stroke-width="1.2"/><path d="M9.5 9.5 L13.5 13.5" stroke="#c98a3a" stroke-width="2.4"/><rect x="6" y="4.5" width="8" height="3" fill="#e03c3c"/></svg>
<div class="a" style="left:332px;top:264px;width:75px;height:25px;border:1px solid #d9d9d9;border-radius:4px;background:#fbfbfb"></div>
<svg class="a" style="left:336px;top:269px" width="16" height="16" viewBox="336 269 16 16"><rect x="340.3" y="270.6" width="2.4" height="12.6" fill="#fff" stroke="#111" stroke-width="1"/><rect x="337.2" y="272.9" width="13.4" height="2.8" fill="#fff" stroke="#111" stroke-width="1"/><rect x="340.8" y="273.4" width="1.4" height="1.8" fill="#fff"/></svg>
<div class="t" style="left:356px;top:271px;font-size:11.2px;color:#000">100%</div>
<div class="a" style="left:410px;top:264px;width:43px;height:25px;border:1px solid #d9d9d9;border-radius:4px;background:#fbfbfb"></div>
<svg class="a" style="left:421px;top:270px" width="15" height="15" viewBox="0 0 15 15"><circle cx="6" cy="6" r="5" fill="#d6ecfb" stroke="#7ab0d8" stroke-width="1.2"/><path d="M9.5 9.5 L13.5 13.5" stroke="#c98a3a" stroke-width="2.4"/><path d="M10 1 V9 M6 5 H14" stroke="#3ca23c" stroke-width="2.6"/></svg>
<svg class="a" style="left:483px;top:271px" width="12" height="13" viewBox="0 0 12 13"><rect x="0.9" y="0.9" width="2.2" height="11.2" fill="#6d9fe6" stroke="#2f62c0" stroke-width="0.8"/><path d="M10.6 0.9 V12.1 L3.6 6.5Z" fill="#6d9fe6" stroke="#2f62c0" stroke-width="0.8"/></svg>
<svg class="a" style="left:504px;top:271px" width="9" height="13" viewBox="0 0 9 13"><path d="M7.6 0.9 V12.1 L0.9 6.5Z" fill="#7aaaf0" stroke="#2f62c0" stroke-width="0.8"/></svg>
<div class="a" style="left:519px;top:263px;width:103px;height:28px;border-top:1px solid #888;border-left:1px solid #aaa;background:#f0f0f0"></div>
<div class="t" style="left:548px;top:272px;font-size:11px;color:#000">Page 1/3</div>
<svg class="a" style="left:627px;top:271px" width="9" height="13" viewBox="0 0 9 13"><path d="M0.9 0.9 V12.1 L7.6 6.5Z" fill="#7aaaf0" stroke="#2f62c0" stroke-width="0.8"/></svg>
<svg class="a" style="left:646px;top:271px" width="12" height="13" viewBox="0 0 12 13"><path d="M0.9 0.9 V12.1 L7.6 6.5Z" fill="#6d9fe6" stroke="#2f62c0" stroke-width="0.8"/><rect x="8.6" y="0.9" width="2.2" height="11.2" fill="#6d9fe6" stroke="#2f62c0" stroke-width="0.8"/></svg>
<div class="a" style="left:688px;top:264px;width:26px;height:25px;border:1px solid #d9d9d9;border-radius:4px;background:#fbfbfb"></div>
<svg class="a" style="left:692px;top:271px" width="13" height="12" viewBox="0 0 13 12"><rect x="1.5" y="0" width="3" height="4" fill="#333"/><rect x="8.5" y="0" width="3" height="4" fill="#333"/><rect x="0" y="3" width="6" height="9" fill="#333"/><rect x="7" y="3" width="6" height="9" fill="#333"/><rect x="5" y="5" width="3" height="3" fill="#333"/><rect x="1" y="7" width="4" height="2" fill="#999"/><rect x="8" y="7" width="4" height="2" fill="#999"/></svg>
<div class="a" style="left:1039px;top:264px;width:25px;height:25px;border:1px solid #d9d9d9;border-radius:4px;background:#fbfbfb"></div>
<svg class="a" style="left:1040px;top:268px" width="18" height="17" viewBox="1040 268 18 17"><defs><linearGradient id="dw" x1="0" y1="0" x2="1" y2="0"><stop offset="0" stop-color="#e8b56c"/><stop offset="0.6" stop-color="#f0cd94"/><stop offset="1" stop-color="#b87a30"/></linearGradient></defs><rect x="1043.5" y="271.6" width="6.8" height="12" fill="#a4a4a4" stroke="#555" stroke-width="0.9"/><rect x="1041.1" y="283.2" width="9" height="0.9" fill="#555"/><path d="M1050.1 271.4 L1056.9 269 V284.8 L1050.1 283.6Z" fill="url(#dw)" stroke="#c0803a" stroke-width="0.6"/><circle cx="1054.2" cy="277.3" r="0.8" fill="#ffd800"/></svg>

<!-- content -->
<div class="a" style="left:106px;top:290px;width:923px;height:453px;background:#808080;overflow:hidden">
  <div class="a" style="left:85px;top:11px;width:753px;height:460px;background:#fff;border-left:1.5px solid #000;border-top:1.5px solid #000;border-right:2px solid #000"></div>
<svg class="a" style="left:177px;top:39px" width="48" height="48" viewBox="0 0 100 100"><defs><radialGradient id="bg1" cx="55%" cy="40%" r="75%"><stop offset="0" stop-color="#2b5169"/><stop offset="1" stop-color="#13293a"/></radialGradient><linearGradient id="gd1" x1="0" y1="0" x2="1" y2="1"><stop offset="0" stop-color="#f2d88c"/><stop offset="0.5" stop-color="#c9963c"/><stop offset="1" stop-color="#e8c470"/></linearGradient></defs>
<rect width="100" height="100" fill="url(#bg1)"/>
<g fill="none" stroke="url(#gd1)" stroke-linecap="round">
<path d="M46 13 V86 M54.5 13 V86" stroke-width="2.8"/>
<path d="M50 22 L47.5 28 L52.5 33 L47.5 38 M50 56 L52.5 62 L47.5 68 L52.5 74" stroke-width="1.3"/>
<path d="M15 41.5 H85 M15 51 H85" stroke-width="2.8"/>
<path d="M18 44 H36 M18 48.5 H36 M64 44 H82 M64 48.5 H82" stroke-width="1.1"/>
<path d="M12 46.2 L16 42.5 L16 50 Z M88 46.2 L84 42.5 L84 50 Z" fill="#d8ae55" stroke-width="1"/>
<path d="M36 12 Q50 19 64 12 M31 19 Q41 17 46 23 M69 19 Q59 17 54.5 23" stroke-width="2.2"/>
<path d="M26 25 L44 39 M74 25 L56 39 M19 31 L37 42 M81 31 L63 42 M19 60 L37 52 M81 60 L63 52 M23 73 L42 57 M77 73 L58 57" stroke-width="1.8"/>
<path d="M33 24 Q35 35 44 38.5 M67 24 Q65 35 56 38.5 M43 56 Q34 65 29 79 M57 56 Q66 65 71 79" stroke-width="2.4"/>
<path d="M36 86 Q50 80 64 86" stroke-width="1.6"/>
</g>
<circle cx="50" cy="11.5" r="2.5" fill="#e6c46e"/><circle cx="50" cy="87.5" r="2.5" fill="#e6c46e"/>
<text x="50" y="50" font-family="Liberation Serif" font-size="10.5" font-weight="bold" fill="#f0d48a" text-anchor="middle">NISN</text>
<path d="M8 89 L9 92 L12 93 L9 94 L8 97 L7 94 L4 93 L7 92Z" fill="#8aa0b4"/></svg>
<div class="t" style="left:434.5px;top:55.4px;font-size:14.2px;color:#000;-webkit-text-stroke:0.2px #000;transform:scaleX(0.905);transform-origin:0 0">REPORTE</div>
<div class="a" style="left:721px;top:40.5px;width:100px;height:14px;overflow:hidden"><div class="t" style="left:0;top:-2px;font-size:12.8px;color:#000">INVERSIONES</div></div>
<svg class="a" style="left:608px;top:36px" width="42" height="54" viewBox="0 0 42 54"><path d="M22.5 3.5 V44" stroke="#e41e26" stroke-width="3.2" stroke-linecap="round"/><path d="M4.5 42 L37 49" stroke="#e41e26" stroke-width="3.4" stroke-linecap="butt"/></svg>
<div class="t" style="left:108.4px;top:123.2px;font-size:12.8px;font-weight:bold;color:#000;">Usuario</div>
<div class="t" style="left:108.4px;top:144.0px;font-size:12.8px;font-weight:bold;color:#000;">Fecha</div>
<div class="t" style="left:108.4px;top:164.9px;font-size:12.8px;font-weight:bold;color:#000;">Módulo</div>
<div class="t" style="left:242.8px;top:123.2px;font-size:12.8px;color:#000;">: Administrador, Usuario</div>
<div class="t" style="left:242.8px;top:144.0px;font-size:12.8px;color:#000;">: 7/08/2025</div>
<div class="t" style="left:242.8px;top:158.3px;font-size:12.8px;color:#000;">: Negocios/</div>
<div class="t" style="left:446.0px;top:144.0px;font-size:12.8px;font-weight:bold;color:#000;">Hora</div>
<div class="t" style="left:580.6px;top:142.6px;font-size:12.8px;color:#000;">: 08:40:22</div>
<div class="a" style="left:109px;top:204px;width:701px;height:21px;background:#c0c0c0;border:1.5px solid #000"></div>
<div class="a" style="left:248.0px;top:204px;width:1.5px;height:21px;background:#000"></div>
<div class="a" style="left:386.9px;top:204px;width:1.5px;height:21px;background:#000"></div>
<div class="a" style="left:529.1px;top:204px;width:1.5px;height:21px;background:#000"></div>
<div class="a" style="left:668.0px;top:204px;width:1.5px;height:21px;background:#000"></div>
<div class="t" style="left:109.0px;top:209.1px;width:139.5px;text-align:center;font-size:12.8px;font-weight:bold;color:#000">Cliente</div>
<div class="t" style="left:248.5px;top:209.1px;width:138.9px;text-align:center;font-size:12.8px;font-weight:bold;color:#000">Sector</div>
<div class="t" style="left:387.4px;top:209.1px;width:142.2px;text-align:center;font-size:12.8px;font-weight:bold;color:#000">Gestor</div>
<div class="t" style="left:529.6px;top:209.1px;width:138.9px;text-align:center;font-size:12.8px;font-weight:bold;color:#000">Fecha y hora</div>
<div class="t" style="left:668.5px;top:209.1px;width:140.5px;text-align:center;font-size:12.8px;font-weight:bold;color:#000">Monto</div>
<div class="t" style="left:109.8px;top:235.0px;font-size:12.8px;color:#000;">Cuyo Colla, Maribel</div>
<div class="t" style="left:251.3px;top:235.0px;font-size:12.8px;color:#000;">S-nuevo Ilo</div>
<div class="t" style="left:390.6px;top:235.0px;font-size:12.8px;color:#000;">Roque Cahuapaza,</div>
<div class="t" style="left:532.4px;top:235.0px;font-size:12.8px;color:#000;">05/08/2025 09:33:38</div>
<div class="t" style="left:671.6px;top:235.0px;font-size:12.8px;color:#000;">25/08/2025</div>
<div class="t" style="left:109.8px;top:259.0px;font-size:12.8px;color:#000;">Salas Beatriz, Salas</div>
<div class="t" style="left:251.3px;top:259.0px;font-size:12.8px;color:#000;">S-puerto</div>
<div class="t" style="left:390.6px;top:259.0px;font-size:12.8px;color:#000;">Roque Cahuapaza,</div>
<div class="t" style="left:532.4px;top:259.0px;font-size:12.8px;color:#000;">05/08/2025 09:34:08</div>
<div class="t" style="left:671.6px;top:259.0px;font-size:12.8px;color:#000;">50</div>
<div class="t" style="left:109.8px;top:283.0px;font-size:12.8px;color:#000;">Ordoñez Zapata, Juan</div>
<div class="t" style="left:251.3px;top:283.0px;font-size:12.8px;color:#000;">S-puerto</div>
<div class="t" style="left:390.6px;top:283.0px;font-size:12.8px;color:#000;">Roque Cahuapaza,</div>
<div class="t" style="left:532.4px;top:283.0px;font-size:12.8px;color:#000;">05/08/2025 09:34:45</div>
<div class="t" style="left:671.6px;top:283.0px;font-size:12.8px;color:#000;">200</div>
<div class="t" style="left:109.8px;top:307.0px;font-size:12.8px;color:#000;">Vasquez Armas,</div>
<div class="t" style="left:251.3px;top:307.0px;font-size:12.8px;color:#000;">S-nuevo Ilo</div>
<div class="t" style="left:390.6px;top:307.0px;font-size:12.8px;color:#000;">Roque Cahuapaza,</div>
<div class="t" style="left:532.4px;top:307.0px;font-size:12.8px;color:#000;">05/08/2025 09:54:37</div>
<div class="t" style="left:671.6px;top:307.0px;font-size:12.8px;color:#000;">35</div>
<div class="t" style="left:109.8px;top:331.0px;font-size:12.8px;color:#000;">Charaña Condori, Julia</div>
<div class="t" style="left:251.3px;top:331.0px;font-size:12.8px;color:#000;">M-alto Ilo</div>
<div class="t" style="left:390.6px;top:331.0px;font-size:12.8px;color:#000;">Roque Cahuapaza,</div>
<div class="t" style="left:532.4px;top:331.0px;font-size:12.8px;color:#000;">05/08/2025 10:00:04</div>
<div class="t" style="left:671.6px;top:331.0px;font-size:12.8px;color:#000;">30/08/2025</div>
<div class="t" style="left:109.8px;top:355.0px;font-size:12.8px;color:#000;">Fernandez De Arana,</div>
<div class="t" style="left:251.3px;top:355.0px;font-size:12.8px;color:#000;">M-alto Ilo</div>
<div class="t" style="left:390.6px;top:355.0px;font-size:12.8px;color:#000;">Roque Cahuapaza,</div>
<div class="t" style="left:532.4px;top:355.0px;font-size:12.8px;color:#000;">05/08/2025 10:03:10</div>
<div class="t" style="left:671.6px;top:355.0px;font-size:12.8px;color:#000;">100</div>
<div class="t" style="left:109.8px;top:379.0px;font-size:12.8px;color:#000;">Nina Mamani,</div>
<div class="t" style="left:251.3px;top:379.0px;font-size:12.8px;color:#000;">M-alto Ilo</div>
<div class="t" style="left:390.6px;top:379.0px;font-size:12.8px;color:#000;">Roque Cahuapaza,</div>
<div class="t" style="left:532.4px;top:379.0px;font-size:12.8px;color:#000;">05/08/2025 10:07:07</div>
<div class="t" style="left:671.6px;top:379.0px;font-size:12.8px;color:#000;">80</div>
<div class="t" style="left:109.8px;top:403.0px;font-size:12.8px;color:#000;">Bedregal Zeballos,</div>
<div class="t" style="left:251.3px;top:403.0px;font-size:12.8px;color:#000;">M-alto Ilo</div>
<div class="t" style="left:390.6px;top:403.0px;font-size:12.8px;color:#000;">Roque Cahuapaza,</div>
<div class="t" style="left:532.4px;top:403.0px;font-size:12.8px;color:#000;">05/08/2025 10:14:41</div>
<div class="t" style="left:671.6px;top:403.0px;font-size:12.8px;color:#000;">20/08/2025</div>
<div class="t" style="left:109.8px;top:427.0px;font-size:12.8px;color:#000;">Flores Gutierrez, Iris</div>
<div class="t" style="left:251.3px;top:427.0px;font-size:12.8px;color:#000;">M-alto Ilo</div>
<div class="t" style="left:390.6px;top:427.0px;font-size:12.8px;color:#000;">Roque Cahuapaza,</div>
<div class="t" style="left:532.4px;top:427.0px;font-size:12.8px;color:#000;">05/08/2025 10:16:46</div>
<div class="t" style="left:671.6px;top:427.0px;font-size:12.8px;color:#000;">30/08/2025</div>
<div class="t" style="left:109.8px;top:451.0px;font-size:12.8px;color:#000;">Saldaña De Lima, Lima</div>
<div class="t" style="left:251.3px;top:451.0px;font-size:12.8px;color:#000;">M-alto Ilo</div>
<div class="t" style="left:390.6px;top:451.0px;font-size:12.8px;color:#000;">Roque Cahuapaza,</div>
<div class="t" style="left:532.4px;top:451.0px;font-size:12.8px;color:#000;">05/08/2025 10:17:20</div>
<div class="t" style="left:671.6px;top:451.0px;font-size:12.8px;color:#000;">20/08/2025</div>
</div>
<div class="a" style="left:1029px;top:290px;width:37px;height:470px;background:#f0f0f0;border-left:1px solid #fff"></div>
<div class="a" style="left:1029px;top:289.5px;width:37px;height:1px;background:#a8a8a8"></div>
<div class="a" style="left:1050px;top:290px;width:1px;height:470px;background:#fff"></div>
<div class="a" style="left:1037px;top:308px;width:2px;height:17px;background:#808080"></div>
<div class="a" style="left:1057px;top:308px;width:1px;height:60px;background:#909090"></div>
<div class="a" style="left:106px;top:743px;width:960px;height:37px;border-radius:0 0 7px 7px;background:#f0f0f0"></div>
<div class="a" style="left:106px;top:764px;width:944px;height:1px;background:#fafafa"></div>
<div class="a" style="left:123px;top:751px;width:17px;height:2px;background:#8a8a8a"></div>
<div class="a" style="left:123px;top:771px;width:908px;height:1px;background:#8a8a8a"></div>

</body></html>
